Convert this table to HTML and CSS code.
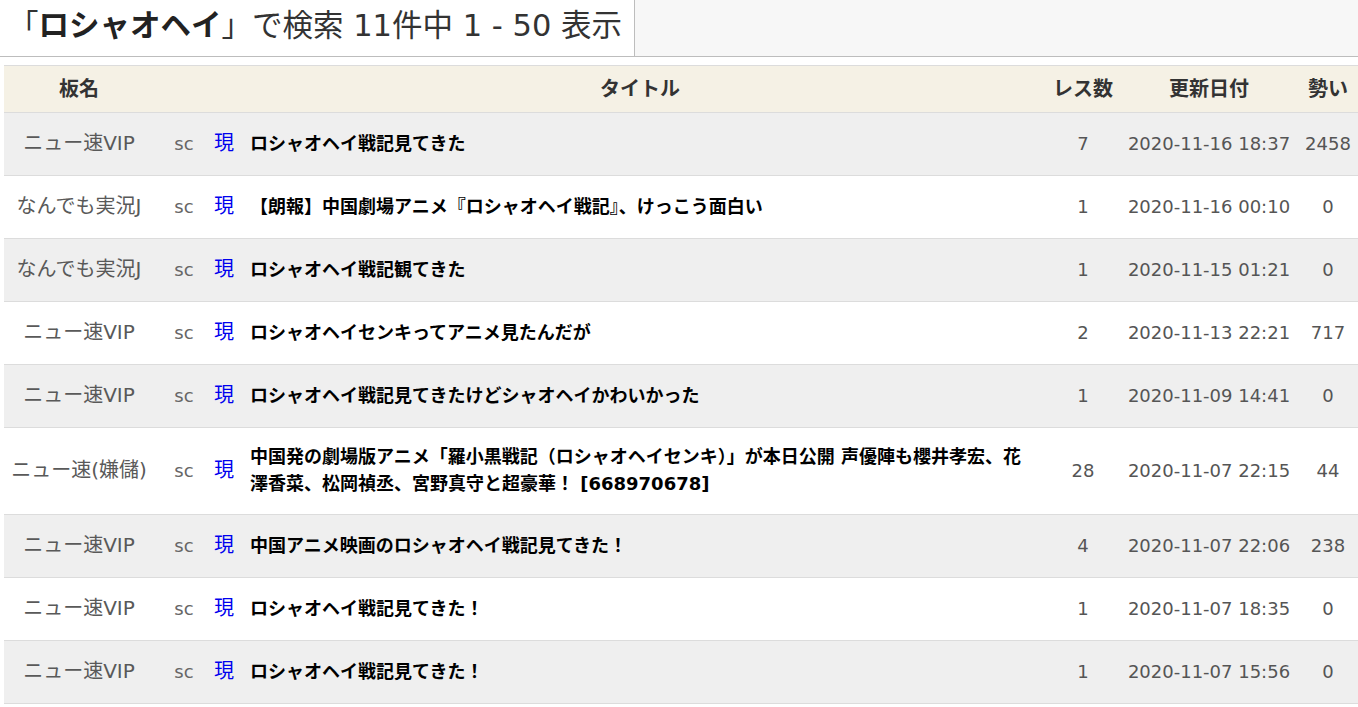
FILE: index.html
```html
<!DOCTYPE html>
<html lang="ja">
<head>
<meta charset="utf-8">
<title>ロシャオヘイ 検索</title>
<link rel="stylesheet" href="styles.css">
</head>
<body>
<div class="topbar">
  <h1 class="search-title">「<b>ロシャオヘイ</b>」で検索 11件中 1 - 50 表示</h1>
</div>
<table class="results">
  <colgroup>
    <col class="c-board"><col class="c-sc"><col class="c-gen"><col class="c-title"><col class="c-res"><col class="c-date"><col class="c-ikioi">
  </colgroup>
  <thead>
    <tr><th>板名</th><th></th><th></th><th>タイトル</th><th>レス数</th><th>更新日付</th><th>勢い</th></tr>
  </thead>
  <tbody>
    <tr><td class="board">ニュー速VIP</td><td class="sc">sc</td><td class="gen">現</td><td class="title">ロシャオヘイ戦記見てきた</td><td class="num">7</td><td class="num">2020-11-16 18:37</td><td class="num">2458</td></tr>
    <tr><td class="board">なんでも実況J</td><td class="sc">sc</td><td class="gen">現</td><td class="title">【朗報】中国劇場アニメ『ロシャオヘイ戦記』、けっこう面白い</td><td class="num">1</td><td class="num">2020-11-16 00:10</td><td class="num">0</td></tr>
    <tr><td class="board">なんでも実況J</td><td class="sc">sc</td><td class="gen">現</td><td class="title">ロシャオヘイ戦記観てきた</td><td class="num">1</td><td class="num">2020-11-15 01:21</td><td class="num">0</td></tr>
    <tr><td class="board">ニュー速VIP</td><td class="sc">sc</td><td class="gen">現</td><td class="title">ロシャオヘイセンキってアニメ見たんだが</td><td class="num">2</td><td class="num">2020-11-13 22:21</td><td class="num">717</td></tr>
    <tr><td class="board">ニュー速VIP</td><td class="sc">sc</td><td class="gen">現</td><td class="title">ロシャオヘイ戦記見てきたけどシャオヘイかわいかった</td><td class="num">1</td><td class="num">2020-11-09 14:41</td><td class="num">0</td></tr>
    <tr><td class="board">ニュー速(嫌儲)</td><td class="sc">sc</td><td class="gen">現</td><td class="title">中国発の劇場版アニメ「羅小黒戦記（ロシャオヘイセンキ）」が本日公開 声優陣も櫻井孝宏、花澤香菜、松岡禎丞、宮野真守と超豪華！ [668970678]</td><td class="num">28</td><td class="num">2020-11-07 22:15</td><td class="num">44</td></tr>
    <tr><td class="board">ニュー速VIP</td><td class="sc">sc</td><td class="gen">現</td><td class="title">中国アニメ映画のロシャオヘイ戦記見てきた！</td><td class="num">4</td><td class="num">2020-11-07 22:06</td><td class="num">238</td></tr>
    <tr><td class="board">ニュー速VIP</td><td class="sc">sc</td><td class="gen">現</td><td class="title">ロシャオヘイ戦記見てきた！</td><td class="num">1</td><td class="num">2020-11-07 18:35</td><td class="num">0</td></tr>
    <tr><td class="board">ニュー速VIP</td><td class="sc">sc</td><td class="gen">現</td><td class="title">ロシャオヘイ戦記見てきた！</td><td class="num">1</td><td class="num">2020-11-07 15:56</td><td class="num">0</td></tr>
  </tbody>
</table>
</body>
</html>
```

FILE: styles.css
```css
html, body {
  margin: 0;
  padding: 0;
  background: #fff;
  font-family: "DejaVu Sans", "Noto Sans CJK JP", sans-serif;
  overflow-x: hidden;
}

.topbar {
  display: flex;
  height: 56px;
  background: #f7f7f7;
  border-bottom: 1px solid #bdbdbd;
}

.search-title {
  margin: 0;
  padding: 0 10px 0 8px;
  width: 616px;
  background: #fff;
  border-right: 1px solid #bdbdbd;
  font-size: 30.5px;
  font-weight: normal;
  line-height: 52px;
  color: #333;
  white-space: nowrap;
}

.search-title b {
  font-weight: bold;
  color: #222;
}

.results {
  margin: 8px 0 0 4px;
  width: 1354px;
  table-layout: fixed;
  border-collapse: separate;
  border-spacing: 0;
  border-top: 1px solid #dcdcdc;
}

.c-board { width: 150px; }
.c-sc { width: 60px; }
.c-gen { width: 20px; }
.c-title { width: 812px; }
.c-res { width: 74px; }
.c-date { width: 178px; }
.c-ikioi { width: 60px; }

.results th {
  height: 47px;
  padding: 0 0 3px;
  background: #f5f1e5;
  border-bottom: 1px solid #dcdcdc;
  font-size: 20px;
  font-weight: bold;
  color: #333;
  text-align: center;
  box-sizing: border-box;
}

.results td {
  height: 63px;
  padding: 0 0 2px;
  border-bottom: 1px solid #dcdcdc;
  font-size: 18px;
  color: #555;
  text-align: center;
  vertical-align: middle;
  line-height: 27px;
  box-sizing: border-box;
}

.results tbody tr:nth-child(odd) td {
  background: #efefef;
}

.results td.board {
  font-size: 20px;
  color: #595959;
}

.results td.sc {
  color: #666;
}

.results td.gen {
  font-size: 20px;
  color: #0000ee;
}

.results td.title {
  padding: 15px 10px 17px 16px;
  text-align: left;
  font-weight: bold;
  color: #000;
}
```
